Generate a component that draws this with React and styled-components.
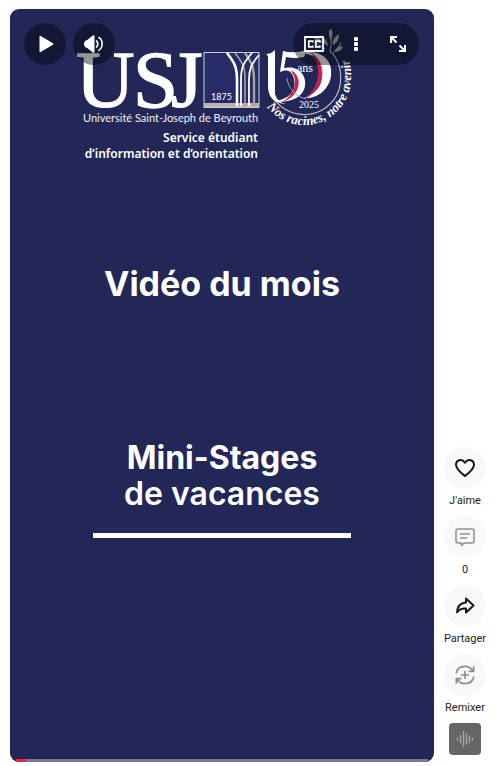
import React from "react";
import styled, { createGlobalStyle } from "styled-components";

const GlobalStyle = createGlobalStyle`
  *, *::before, *::after { box-sizing: border-box; }
  body { margin: 0; background: #ffffff; font-family: Roboto, sans-serif; }
  h1, h2, p { margin: 0; }
`;

const Page = styled.main`
  display: flex;
  gap: 10px;
  min-height: 100vh;
  padding: 9px 14px 4px 10px;
`;

const Player = styled.section`
  position: relative;
  flex: 1;
  min-width: 0;
  display: flex;
  flex-direction: column;
  align-items: center;
  padding-top: 11px;
  overflow: hidden;
  border-radius: 9px;
  background: #222757;
  color: #ffffff;
`;

const Controls = styled.div`
  position: absolute;
  top: 14px;
  left: 14px;
  right: 15px;
  display: flex;
  gap: 7px;
`;

const ControlButton = styled.button`
  display: grid;
  place-items: center;
  width: 42px;
  height: 42px;
  padding: 0;
  border: 0;
  border-radius: 50%;
  background: ${({ $bare }) => ($bare ? "transparent" : "rgba(0, 0, 8, 0.42)")};
  color: #ffffff;
  cursor: pointer;
`;

const ControlPill = styled.div`
  display: flex;
  margin-left: auto;
  border-radius: 21px;
  background: rgba(0, 0, 8, 0.42);
`;

const Brand = styled.header`
  width: 310px;
  max-width: 100%;
`;

const BrandLogo = styled.svg`
  display: block;
  width: 100%;
  overflow: visible;
`;

const Department = styled.p`
  width: 191px;
  font: 600 12px/16px "Noto Sans", sans-serif;
  text-align: right;
  white-space: nowrap;
`;

const Title = styled.h1`
  margin-top: 102px;
  font: 700 34px/40px Inter, sans-serif;
  white-space: nowrap;
`;

const Topic = styled.h2`
  display: flex;
  flex-direction: column;
  align-items: center;
  margin-top: 136px;
  font: 700 32px/36px Inter, sans-serif;
  white-space: nowrap;
`;

const TopicDetail = styled.span`
  font: 600 32px/36px Inter, sans-serif;
`;

const Rule = styled.hr`
  width: 258px;
  height: 5px;
  margin: 21px 0 0;
  border: 0;
  background: #ffffff;
`;

const Progress = styled.div`
  position: absolute;
  left: 6px;
  right: 6px;
  bottom: 0;
  height: 3px;
  background: #777a9c;
`;

const Played = styled.div`
  width: 10px;
  height: 100%;
  background: #f01f45;
`;

const Actions = styled.aside`
  display: flex;
  flex-direction: column;
  justify-content: flex-end;
  align-items: center;
  gap: 8px;
  width: 42px;
  padding-bottom: 7px;
`;

const Action = styled.button`
  display: flex;
  flex-direction: column;
  align-items: center;
  gap: 4px;
  padding: 0;
  border: 0;
  background: none;
  color: #222222;
  font: 400 11px/15px Roboto, sans-serif;
  white-space: nowrap;
  cursor: pointer;
`;

const ActionIcon = styled.span`
  display: grid;
  place-items: center;
  width: 42px;
  height: 42px;
  border-radius: 50%;
  background: #f7f8fa;
  color: ${({ $muted }) => ($muted ? "#8d8d8d" : "#171717")};
`;

const SoundButton = styled.button`
  display: grid;
  place-items: center;
  width: 32px;
  height: 32px;
  padding: 0;
  border: 0;
  border-radius: 4px;
  background: #666666;
  color: #a6a6a6;
  cursor: pointer;
`;

const PlayIcon = () => (
  <svg width="20" height="20" viewBox="0 0 20 20" fill="currentColor" aria-hidden="true">
    <path d="M4.5 2.7Q4.5 1.5 5.7 2L18 9.2Q19 10 18 10.8L5.7 18Q4.5 18.5 4.5 17.3Z" />
  </svg>
);

const VolumeIcon = () => (
  <svg width="22" height="20" viewBox="0 0 22 20" fill="none" aria-hidden="true">
    <path d="M1 10Q1 6.8 4.2 6L9.5 1.8Q11.5.5 11.5 2.5V17.5Q11.5 19.5 9.5 18.2L4.2 14Q1 13.2 1 10Z" fill="currentColor" />
    <path d="M13.2 6.4Q16.4 10 13.2 13.6M15.3 3.2Q18 4.4 18.8 7Q20.4 13.6 15.3 16.8" stroke="currentColor" strokeWidth="1.6" />
  </svg>
);

const CaptionsIcon = () => (
  <svg width="20" height="16" viewBox="0 0 20 16" fill="none" stroke="currentColor" strokeWidth="1.8" aria-hidden="true">
    <path d="M1 1H19V15H1Z" />
    <path d="M8.7 6.6V5.2H4.8V10.8H8.7V9.4M15.7 6.6V5.2H11.8V10.8H15.7V9.4" />
  </svg>
);

const MoreIcon = () => (
  <svg width="6" height="16" viewBox="0 0 6 16" fill="currentColor" aria-hidden="true">
    <rect x="1" y="1" width="4" height="4" rx="1" />
    <rect x="1" y="6" width="4" height="4" rx="1" />
    <rect x="1" y="11" width="4" height="4" rx="1" />
  </svg>
);

const ExpandIcon = () => (
  <svg width="18" height="18" viewBox="0 0 18 18" fill="none" stroke="currentColor" strokeWidth="2" aria-hidden="true">
    <path d="M2 8V2H8M2 2L7.5 7.5M16 10V16H10M16 16L10.5 10.5" />
  </svg>
);

const HeartIcon = () => (
  <svg width="22" height="20" viewBox="0 0 22 20" fill="none" stroke="currentColor" strokeWidth="2" strokeLinejoin="round" aria-hidden="true">
    <path d="M11 18C8.5 16 2 11.4 2 6.8C2 1.8 8 .3 11 4.8C14 .3 20 1.8 20 6.8C20 11.4 13.5 16 11 18Z" />
  </svg>
);

const CommentIcon = () => (
  <svg width="20" height="20" viewBox="0 0 20 20" fill="none" stroke="currentColor" strokeWidth="1.5" strokeLinejoin="round" aria-hidden="true">
    <path d="M3 2H17Q19 2 19 4V14Q19 16 17 16H9L6.5 18.5V16H3Q1 16 1 14V4Q1 2 3 2Z" />
    <path d="M5 7H15M5 11H12" />
  </svg>
);

const ShareIcon = () => (
  <svg width="20" height="20" viewBox="0 0 20 20" fill="none" stroke="currentColor" strokeWidth="2" strokeLinejoin="round" aria-hidden="true">
    <path d="M11 2.5L18.5 9.5L11 16.5V12.5C7 12.2 4.2 13.4 2 16.2C2.4 10.6 5.6 7 11 6.5Z" />
  </svg>
);

const RemixIcon = () => (
  <svg width="22" height="22" viewBox="0 0 22 22" fill="none" stroke="currentColor" strokeWidth="1.7" aria-hidden="true">
    <path d="M2.2 9.5C3 4.8 6.7 2.4 11 2.4C14.4 2.4 17 4 18.8 6.8M19.6 2.2V7.3H14.5" />
    <path d="M19.8 12.5C19 17.2 15.3 19.6 11 19.6C7.6 19.6 5 18 3.2 15.2M2.4 19.8V14.7H7.5" />
    <path d="M11 7V15M7 11H15" />
  </svg>
);

const WaveIcon = () => (
  <svg width="18" height="20" viewBox="0 0 18 20" fill="none" stroke="currentColor" strokeWidth="1.4" strokeLinecap="round" aria-hidden="true">
    <path d="M1.5 9V11M4.5 6.5V13.5M7.5 2.5V17.5M10.5 5V15M13.5 7V13M16.5 9V11" />
  </svg>
);

const UniversityLogo = () => (
  <BrandLogo viewBox="67 20 310 110" role="img" aria-label="USJ, Université Saint-Joseph de Beyrouth, 150 ans">
    <text x="76 133 171" y="107" fill="#fff" stroke="#fff" strokeWidth="1.4" fontFamily="Liberation Serif, serif" fontSize="81">USJ</text>
    <text x="83" y="122" fill="#f2f2f7" fontFamily="Lato, sans-serif" fontSize="11">Université Saint-Joseph de Beyrouth</text>

    <rect x="204" y="52.5" width="55" height="55" fill="#272b67" stroke="#cccde0" />
    <rect x="204" y="103" width="55" height="4" fill="#beb4ad" />
    <text x="211" y="100" fill="#fff" fontFamily="Lato, sans-serif" fontSize="9">1875</text>
    <g fill="none">
      <path d="M235 53C242 62 245 66 245 78V106" stroke="#aaa19f" strokeWidth="1.6" />
      <path d="M245 53C252 63 254 68 254 80V106" stroke="#aaa19f" strokeWidth="2.4" />
      <path d="M227 53C235 63 237 68 237 80V106" stroke="#fff" strokeWidth="2.6" />
      <path d="M252 53C243 63 241 68 241 80V106M259 55C251 64 249 70 249 80V106" stroke="#fff" strokeWidth="1.8" />
    </g>

    <g fill="none" stroke="#b8bbcc">
      <path d="M271 94A37 37 0 0 0 339 90C343 75 340 60 330 51" strokeWidth="1.2" />
      <path d="M330 51Q333 41 329 31M333 53Q339 49 341 42M325 49Q319 46 315 41" />
    </g>
    <g fill="#b9bbb9">
      <path d="M331 28Q334 34 331 40Q327 34 331 28Z" />
      <path d="M321 35Q327 39 328 46Q321 43 321 35Z" />
      <path d="M339 34Q339 42 333 45Q332 38 339 34Z" />
      <path d="M343 46Q341 52 334 52Q336 46 343 46Z" />
      <path d="M313 36Q320 37 323 43Q316 43 313 36Z" />
    </g>
    <path d="M306 52C324 51 333 62 331 76C329 90 317 99 304 98C318 92 324 84 321 70C319 60 314 55 306 54Z" fill="#fff" />
    <path d="M311 53C325 60 328 86 306 98C321 86 322 65 311 53Z" fill="#d41d46" stroke="#d41d46" strokeWidth="0.6" />
    <path d="M266 54Q271 54 275 50V94Q277 102 286 104Q268 103 268 86V57Q268 55 266 54Z" fill="#fff" />
    <path d="M283 51Q294 54 307 50L304 57Q294 59 286 57L284 68C297 65 307 74 305 86C303 99 286 104 273 101C289 100 297 91 294 79C292 70 286 69 280 72Z" fill="#fff" />
    <path d="M290 70C304 75 301 97 282 102C296 94 299 79 290 70Z" fill="#d41d46" />
    <path d="M287 78C288 88 295 96 306 99" fill="none" stroke="#9b9eb7" />
    <text x="297" y="72" fill="#fff" fontFamily="Liberation Serif, serif" fontSize="12">ans</text>
    <text x="299" y="108" fill="#fff" fontFamily="Liberation Serif, serif" fontSize="10">2025</text>
    <path id="motto" d="M267 107A47 47 0 0 0 351 76A47 47 0 0 0 344 50" fill="none" />
    <text fill="#fff" fontFamily="Liberation Serif, serif" fontSize="13" fontStyle="italic" fontWeight="700">
      <textPath href="#motto">Nos racines, notre avenir</textPath>
    </text>
  </BrandLogo>
);

const actions = [
  { label: "J'aime", Icon: HeartIcon },
  { label: "0", Icon: CommentIcon, muted: true, name: "Commentaires : 0" },
  { label: "Partager", Icon: ShareIcon },
  { label: "Remixer", Icon: RemixIcon, muted: true },
];

export default function App() {
  return (
    <>
      <GlobalStyle />
      <Page>
        <Player aria-label="Vidéo">
          <Brand>
            <UniversityLogo />
            <Department>
              Service étudiant
              <br />
              d’information et d’orientation
            </Department>
          </Brand>
          <Title>Vidéo du mois</Title>
          <Topic>
            Mini-Stages
            <TopicDetail>de vacances</TopicDetail>
          </Topic>
          <Rule />
          <Controls>
            <ControlButton aria-label="Lecture"><PlayIcon /></ControlButton>
            <ControlButton aria-label="Volume"><VolumeIcon /></ControlButton>
            <ControlPill>
              <ControlButton $bare aria-label="Sous-titres"><CaptionsIcon /></ControlButton>
              <ControlButton $bare aria-label="Plus d'options"><MoreIcon /></ControlButton>
              <ControlButton $bare aria-label="Plein écran"><ExpandIcon /></ControlButton>
            </ControlPill>
          </Controls>
          <Progress><Played /></Progress>
        </Player>
        <Actions>
          {actions.map(({ label, Icon, muted, name }) => (
            <Action key={label} aria-label={name}>
              <ActionIcon $muted={muted}><Icon /></ActionIcon>
              {label}
            </Action>
          ))}
          <SoundButton aria-label="Son utilisé"><WaveIcon /></SoundButton>
        </Actions>
      </Page>
    </>
  );
}
